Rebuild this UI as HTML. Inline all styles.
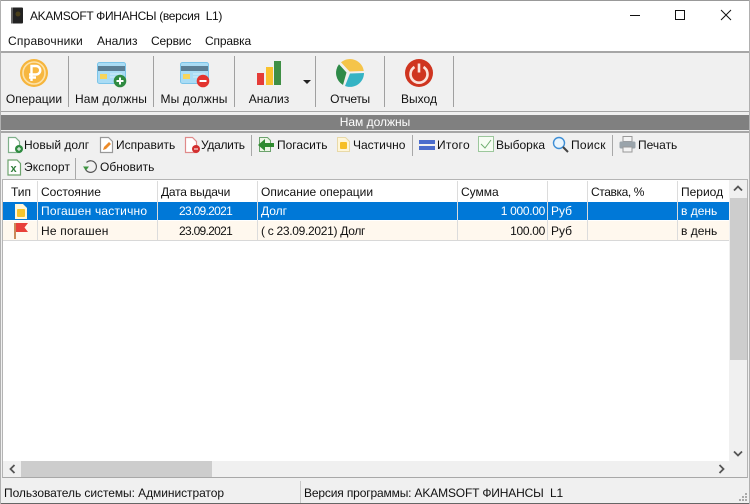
<!DOCTYPE html>
<html lang="ru"><head><meta charset="utf-8"><title>AKAMSOFT ФИНАНСЫ</title>
<style>
html,body{margin:0;padding:0}
body{width:750px;height:504px;position:relative;overflow:hidden;background:#f0f0f0;font:12px/16px "Liberation Sans",sans-serif;color:#111}
div,svg,span{position:absolute}
.t{white-space:nowrap}
.c{white-space:nowrap;text-align:center}
.vs{width:1px;background:#a0a0a0}
.ts{width:1px;background:#a8a8a8;height:21px}
.col{width:1px;top:181px;height:59px;background:#dcdcdc}
.d{letter-spacing:-.7px}
.s{letter-spacing:-.3px}
</style></head><body>
<!-- title bar and menu -->
<div style="left:0;top:0;width:750px;height:51px;background:#fff"></div>
<div style="left:0;top:0;width:750px;height:1px;background:#999"></div>
<svg style="left:10px;top:7px" width="14" height="17" viewBox="0 0 14 17"><rect x="1" y="0.5" width="12" height="16" rx="1" fill="#222"/><rect x="1" y="0.5" width="2" height="16" fill="#666"/><circle cx="8" cy="7" r="2.5" fill="#4a3f1a"/></svg>
<div class="t" style="left:30px;top:8px;letter-spacing:-.33px">AKAMSOFT ФИНАНСЫ (версия&nbsp; L1)</div>
<svg style="left:620px;top:5px" width="125" height="22" viewBox="0 0 125 22" fill="none" stroke="#111" stroke-width="1"><path d="M10 10.5H20"/><rect x="55.5" y="5.5" width="9" height="9"/><path d="M101 5l10 10M111 5l-10 10"/></svg>
<div class="t" style="left:8px;top:33px;letter-spacing:.2px">Справочники</div>
<div class="t" style="left:97px;top:33px">Анализ</div>
<div class="t" style="left:151px;top:33px;letter-spacing:-.15px">Сервис</div>
<div class="t" style="left:205px;top:33px;letter-spacing:-.15px">Справка</div>
<div style="left:0;top:51px;width:750px;height:2px;background:#a6a6a6"></div>

<!-- main toolbar -->
<svg style="left:20px;top:59px" width="28" height="28" viewBox="0 0 28 28"><circle cx="14" cy="14" r="14" fill="#f6b53c"/><circle cx="14" cy="14" r="11" fill="#f7b740" stroke="#fde2a8" stroke-width="1.6"/><path d="M11.500 22V7h4.500a4 4 0 0 1 0 8.500H9M9 18.500h7" fill="none" stroke="#fff" stroke-width="2.400"/></svg>
<div class="vs" style="left:68px;top:56px;height:51px"></div>
<svg style="left:97px;top:62px" width="31" height="26" viewBox="0 0 31 26"><rect x="0.5" y="0.5" width="28" height="21" rx="2" fill="#a9dcf5" stroke="#7cc4e8"/><rect x="1" y="4" width="27" height="5" fill="#5b7f95"/><rect x="3" y="12" width="7" height="5" fill="#f7d55b"/><path d="M13 12h12M13 15h9" stroke="#d5eef9"/><circle cx="23" cy="19" r="6.300" fill="#2f8b41"/><path d="M23 15.500v7M19.500 19h7" stroke="#fff" stroke-width="2"/></svg>
<div class="vs" style="left:153px;top:56px;height:51px"></div>
<svg style="left:180px;top:62px" width="31" height="26" viewBox="0 0 31 26"><rect x="0.5" y="0.5" width="28" height="21" rx="2" fill="#a9dcf5" stroke="#7cc4e8"/><rect x="1" y="4" width="27" height="5" fill="#5b7f95"/><rect x="3" y="12" width="7" height="5" fill="#f7d55b"/><path d="M13 12h12M13 15h9" stroke="#d5eef9"/><circle cx="23" cy="19" r="6.300" fill="#e3342f"/><path d="M19.500 19h7" stroke="#fff" stroke-width="2"/></svg>
<div class="vs" style="left:234px;top:56px;height:51px"></div>
<svg style="left:256px;top:60px" width="26" height="26" viewBox="0 0 26 26"><rect x="1" y="13" width="7" height="12" fill="#e53c38"/><rect x="10" y="7" width="7" height="18" fill="#f9c22e"/><rect x="18" y="1" width="7" height="24" fill="#3f8f45"/></svg>
<svg style="left:303px;top:80px" width="8" height="4" viewBox="0 0 8 4"><path d="M0 0h8L4 4z" fill="#222"/></svg>
<div class="vs" style="left:315px;top:56px;height:51px"></div>
<svg style="left:336px;top:59px" width="28" height="28" viewBox="0 0 28 28"><path d="M5 3.300A14 14 0 0 1 27.800 12L13.500 12.500z" fill="#f5c44a"/><path d="M28 14L14 14.500L9 27A14 14 0 0 0 28 14z" fill="#34b3c4"/><path d="M3 5.300L10.500 13.500L7 26A14 14 0 0 1 3 5.300z" fill="#2e8a48"/></svg>
<div class="vs" style="left:384px;top:56px;height:51px"></div>
<svg style="left:405px;top:59px" width="28" height="28" viewBox="0 0 28 28"><circle cx="14" cy="14" r="14" fill="#cf3520"/><path d="M9.500 8a8.500 8.500 0 1 0 9 0" fill="none" stroke="#fbe3dc" stroke-width="2.600"/><path d="M14 4.500v9" stroke="#fbe3dc" stroke-width="2.600"/></svg>
<div class="vs" style="left:453px;top:56px;height:51px"></div>

<div class="c" style="left:0;top:91px;width:68px">Операции</div>
<div class="c" style="left:69px;top:91px;width:84px;letter-spacing:.15px">Нам должны</div>
<div class="c" style="left:154px;top:91px;width:80px;letter-spacing:.15px">Мы должны</div>
<div class="c" style="left:235px;top:91px;width:68px">Анализ</div>
<div class="c" style="left:316px;top:91px;width:68px;letter-spacing:-.3px">Отчеты</div>
<div class="c" style="left:385px;top:91px;width:68px">Выход</div>
<div style="left:0;top:111px;width:750px;height:1px;background:#a6a6a6"></div>

<!-- section title -->
<div style="left:0;top:115px;width:750px;height:15px;background:#808080"></div>
<div class="c" style="left:0;top:114px;width:750px;color:#fff">Нам должны</div>
<div style="left:0;top:131px;width:750px;height:2px;background:#a6a6a6"></div>

<!-- secondary toolbar -->
<svg style="left:7px;top:136px" width="17" height="18" viewBox="0 0 17 18"><path d="M1.500 1.500h7l4 4v11h-11z" fill="#fff" stroke="#7fb08a" stroke-width="1.200"/><circle cx="12" cy="13" r="4" fill="#2f8b41"/><path d="M12 11v4M10 13h4" stroke="#fff"/></svg>
<div class="t" style="left:24px;top:137px">Новый долг</div>
<svg style="left:99px;top:136px" width="16" height="18" viewBox="0 0 16 18"><path d="M1.500 1.500h8l4 4v11h-12z" fill="#fff" stroke="#999" stroke-width="1.200"/><path d="M4 14l1-3 5-5 2 2-5 5z" fill="#ec8a28"/></svg>
<div class="t" style="left:116px;top:137px">Исправить</div>
<svg style="left:184px;top:136px" width="17" height="18" viewBox="0 0 17 18"><path d="M1.500 1.500h7l4 4v11h-11z" fill="#fff" stroke="#e08a8a" stroke-width="1.200"/><circle cx="12" cy="13" r="4" fill="#d32f2f"/><path d="M10 13h4" stroke="#fff"/></svg>
<div class="t s" style="left:201px;top:137px">Удалить</div>
<div class="ts" style="left:251px;top:135px"></div>
<svg style="left:258px;top:136px" width="17" height="17" viewBox="0 0 17 17"><path d="M1.500 1.500h8l3 3v11h-11z" fill="#edf6e6" stroke="#6da36e"/><path d="M0 9l7-6v4h9v4H7v4z" fill="#2f8b2f"/></svg>
<div class="t" style="left:277px;top:137px">Погасить</div>
<svg style="left:336px;top:136px" width="15" height="17" viewBox="0 0 15 17"><path d="M1.500 1.500h8l4 4v10h-12z" fill="#fff6d8" stroke="#e8d9a8"/><rect x="4" y="6" width="7" height="7" rx="1" fill="#f6bf26"/></svg>
<div class="t" style="left:353px;top:137px">Частично</div>
<div class="ts" style="left:412px;top:135px"></div>
<svg style="left:419px;top:140px" width="16" height="10" viewBox="0 0 16 10"><rect width="16" height="4" fill="#4a6ccc"/><rect y="6" width="16" height="4" fill="#4a6ccc"/></svg>
<div class="t" style="left:437px;top:137px;letter-spacing:.3px">Итого</div>
<svg style="left:478px;top:136px" width="17" height="17" viewBox="0 0 17 17"><rect x="0.5" y="0.5" width="15" height="15" fill="#f6fdf3" stroke="#9cc79c"/><path d="M3 8l4 4 6-8" fill="none" stroke="#6fae6f"/></svg>
<div class="t" style="left:496px;top:137px">Выборка</div>
<svg style="left:552px;top:136px" width="18" height="17" viewBox="0 0 18 17"><circle cx="7" cy="7" r="5.500" fill="#eaf5fd" stroke="#3d8ed6" stroke-width="1.400"/><path d="M11 11l5 5" stroke="#444" stroke-width="2"/></svg>
<div class="t" style="left:571px;top:137px;letter-spacing:.3px">Поиск</div>
<div class="ts" style="left:612px;top:135px"></div>
<svg style="left:619px;top:136px" width="17" height="17" viewBox="0 0 17 17"><rect x="4" y="0.5" width="9" height="5" fill="#f4f4f4" stroke="#999"/><rect x="0.5" y="5.500" width="16" height="7" rx="1.500" fill="#9aa4ab"/><rect x="4" y="11" width="9" height="5" fill="#f4f4f4" stroke="#999"/></svg>
<div class="t" style="left:638px;top:137px">Печать</div>
<svg style="left:7px;top:159px" width="15" height="17" viewBox="0 0 15 17"><path d="M1 1h9l3.500 3.500V16H1z" fill="#fff" stroke="#6da36e" stroke-width="1.200"/><text x="3.500" y="13" font-family="Liberation Sans,sans-serif" font-size="11" font-weight="bold" fill="#2f7d3a">x</text></svg>
<div class="t" style="left:24px;top:159px;letter-spacing:.15px">Экспорт</div>
<div class="ts" style="left:75px;top:158px"></div>
<svg style="left:83px;top:159px" width="15" height="15" viewBox="0 0 15 15"><path d="M3.500 3.500A5.800 5.800 0 1 1 2 9" fill="none" stroke="#555" stroke-width="1.200"/><path d="M0 7.500h6L3 11.500z" fill="#3d9440"/></svg>
<div class="t" style="left:100px;top:159px">Обновить</div>

<!-- table frame -->
<div style="left:2px;top:179px;width:746px;height:299px;background:#fff;border-top:1px solid #b4b4b4;border-bottom:1px solid #a8a8a8;box-sizing:border-box;border-left:1px solid #b4b4b4;border-right:1px solid #b4b4b4"></div>
<div style="left:3px;top:202px;width:726px;height:18px;background:#0078d7"></div>
<div style="left:3px;top:221px;width:726px;height:19px;background:#fff8ee"></div>
<div style="left:3px;top:240px;width:726px;height:1px;background:#d8d8d8"></div>
<div class="col" style="left:37px"></div><div class="col" style="left:157px"></div><div class="col" style="left:257px"></div><div class="col" style="left:457px"></div><div class="col" style="left:547px"></div><div class="col" style="left:587px"></div><div class="col" style="left:677px"></div>

<div class="t" style="left:11px;top:184px">Тип</div>
<div class="t" style="left:41px;top:184px">Состояние</div>
<div class="t" style="left:161px;top:184px;letter-spacing:-.2px">Дата выдачи</div>
<div class="t" style="left:261px;top:184px">Описание операции</div>
<div class="t" style="left:461px;top:184px">Сумма</div>
<div class="t" style="left:591px;top:184px;letter-spacing:-.4px">Ставка, %</div>
<div class="t" style="left:681px;top:184px">Период</div>

<svg style="left:14px;top:202px" width="14" height="18" viewBox="0 0 14 18"><path d="M1 2h8l4 4v11H1z" fill="#fff6d8"/><rect x="3" y="7" width="8" height="8" rx="1" fill="#f6c52c"/></svg>
<div class="t" style="left:41px;top:203px;color:#fff;letter-spacing:.2px">Погашен частично</div>
<div class="t d" style="left:179px;top:203px;color:#fff">23.09.2021</div>
<div class="t" style="left:261px;top:203px;color:#fff">Долг</div>
<div class="t s" style="left:457px;top:203px;width:88px;text-align:right;color:#fff">1 000.00</div>
<div class="t" style="left:551px;top:203px;color:#fff">Руб</div>
<div class="t" style="left:681px;top:203px;color:#fff">в день</div>

<svg style="left:13px;top:222px" width="16" height="18" viewBox="0 0 16 18"><rect x="1" y="1" width="2" height="16" fill="#c98a5a"/><path d="M3 1h12l-3.500 4.500L15 10H3z" fill="#e8403a"/></svg>
<div class="t" style="left:41px;top:223px;letter-spacing:.2px">Не погашен</div>
<div class="t d" style="left:179px;top:223px">23.09.2021</div>
<div class="t" style="left:261px;top:223px;letter-spacing:-.3px">( с 23.09.2021) Долг</div>
<div class="t s" style="left:457px;top:223px;width:88px;text-align:right">100.00</div>
<div class="t" style="left:551px;top:223px">Руб</div>
<div class="t" style="left:681px;top:223px">в день</div>

<!-- scrollbars -->
<div style="left:729px;top:180px;width:18px;height:297px;background:#f0f0f0"></div>
<div style="left:3px;top:461px;width:744px;height:16px;background:#f0f0f0"></div>
<div style="left:730px;top:198px;width:17px;height:162px;background:#cdcdcd"></div>
<div style="left:21px;top:461px;width:191px;height:16px;background:#cdcdcd"></div>
<svg style="left:733px;top:185px" width="10" height="7" viewBox="0 0 10 7"><path d="M1 5.500l4-4 4 4" fill="none" stroke="#555" stroke-width="1.800"/></svg>
<svg style="left:733px;top:450px" width="10" height="7" viewBox="0 0 10 7"><path d="M1 1.500l4 4 4-4" fill="none" stroke="#555" stroke-width="1.800"/></svg>
<svg style="left:9px;top:464px" width="7" height="10" viewBox="0 0 7 10"><path d="M5.500 1l-4 4 4 4" fill="none" stroke="#555" stroke-width="1.800"/></svg>
<svg style="left:718px;top:464px" width="7" height="10" viewBox="0 0 7 10"><path d="M1.500 1l4 4-4 4" fill="none" stroke="#555" stroke-width="1.800"/></svg>

<!-- status bar -->
<div class="t" style="left:4px;top:485px;letter-spacing:-.06px">Пользователь системы: Администратор</div>
<div style="left:300px;top:481px;width:1px;height:22px;background:#c8c8c8"></div>
<div class="t" style="left:304px;top:485px;letter-spacing:-.15px">Версия программы: AKAMSOFT ФИНАНСЫ&nbsp; L1</div>
<svg style="left:738px;top:492px" width="10" height="10" viewBox="0 0 10 10" fill="#aaa"><rect x="7" y="1" width="2" height="2"/><rect x="4" y="4" width="2" height="2"/><rect x="7" y="4" width="2" height="2"/><rect x="1" y="7" width="2" height="2"/><rect x="4" y="7" width="2" height="2"/><rect x="7" y="7" width="2" height="2"/></svg>
<div style="left:0;top:503px;width:750px;height:1px;background:#666"></div>
<div style="left:0;top:0;width:1px;height:504px;background:#b0b0b0"></div>
<div style="left:749px;top:0;width:1px;height:504px;background:#b0b0b0"></div>
</body></html>
